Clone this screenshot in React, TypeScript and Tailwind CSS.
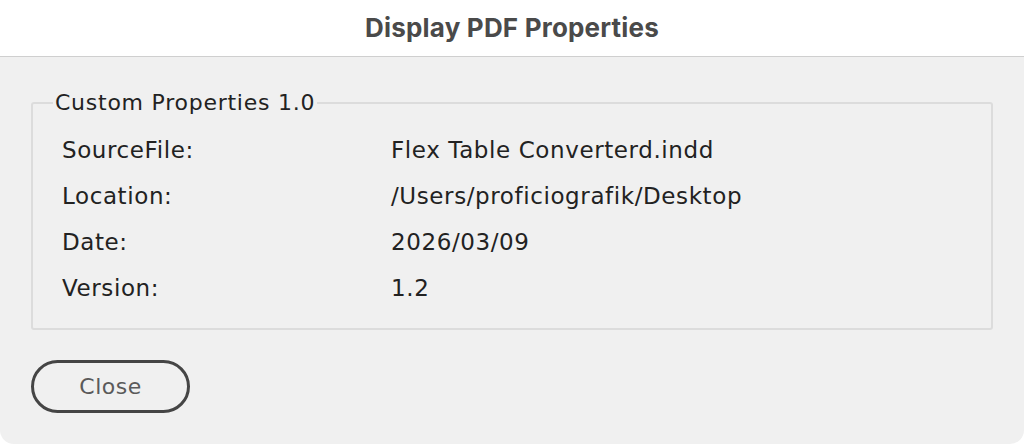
import React from "react";

const rows = [
  { label: "SourceFile:", value: "Flex Table Converterd.indd" },
  { label: "Location:", value: "/Users/proficiografik/Desktop" },
  { label: "Date:", value: "2026/03/09" },
  { label: "Version:", value: "1.2" },
];

export default function App() {
  return (
    <div
      className="w-[1024px] h-[444px] bg-white"
      style={{ fontFamily: '"DejaVu Sans", "Noto Sans", sans-serif' }}
    >
      <div className="flex flex-col h-full bg-[#f0f0f0] rounded-b-[14px] overflow-hidden">
        <div className="h-[57px] shrink-0 bg-white border-b border-[#cfcfcf] flex items-center justify-center pb-[2px]">
          <h1
            className="text-[26px] font-bold text-[#4a4a4a] tracking-[0.2px]"
            style={{ fontFamily: 'Inter, "Noto Sans", sans-serif' }}
          >
            Display PDF Properties
          </h1>
        </div>

        <div className="px-[31px] pt-[33px]">
          <fieldset className="border-2 border-[#dcdcdc] rounded-[3px] pl-[29px] pr-4 pt-[11px] pb-[24px] h-[240px]">
            <legend className="px-[2px] -ml-[9px] text-[22px] leading-[26px] text-[#222] tracking-[0.75px]">
              Custom Properties 1.0
            </legend>
            <div className="flex flex-col">
              {rows.map((r) => (
                <div key={r.label} className="flex h-[46px] items-center text-[23px] text-[#222] tracking-[0.6px]">
                  <span className="w-[329px]">{r.label}</span>
                  <span>{r.value}</span>
                </div>
              ))}
            </div>
          </fieldset>
        </div>

        <div className="px-[31px] pt-[30px]">
          <button className="w-[159px] h-[53px] rounded-full border-[3px] border-[#454545] text-[22px] text-[#5a5a5a] tracking-[0.5px]">
            Close
          </button>
        </div>
      </div>
    </div>
  );
}
